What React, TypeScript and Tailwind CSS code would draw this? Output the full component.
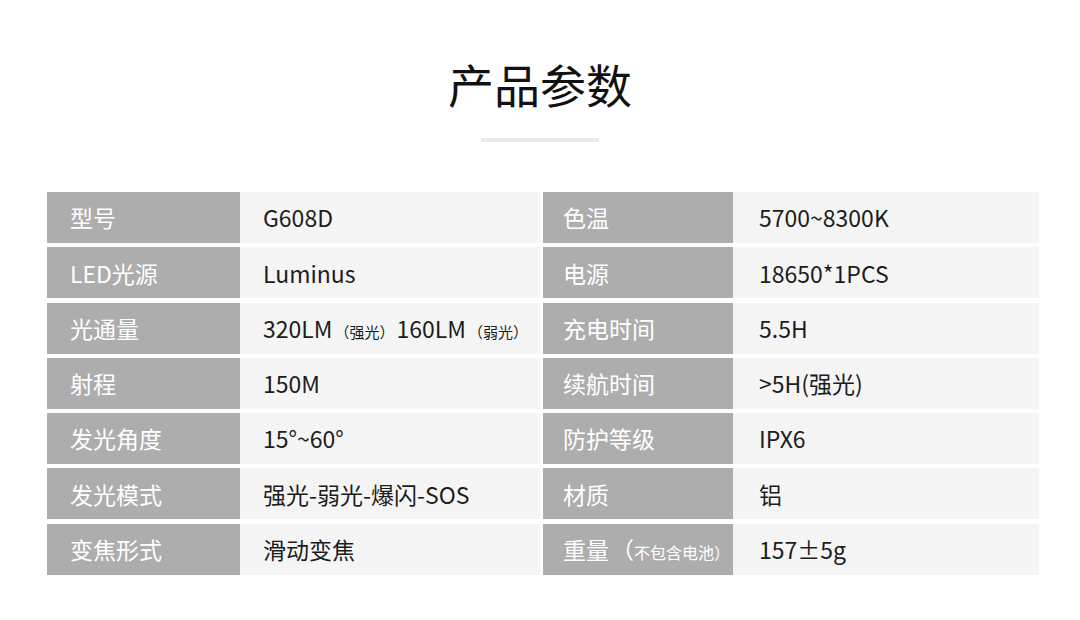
import React from 'react';

type Cell = { label: React.ReactNode; value: React.ReactNode };

const rows: [Cell, Cell][] = [
  [
    { label: '型号', value: 'G608D' },
    { label: '色温', value: '5700~8300K' },
  ],
  [
    { label: 'LED光源', value: 'Luminus' },
    { label: '电源', value: '18650*1PCS' },
  ],
  [
    {
      label: '光通量',
      value: (
        <>
          320LM<span className="text-[15px] mx-[2px]">（强光）</span>160LM
          <span className="text-[15px] ml-[2px]">（弱光）</span>
        </>
      ),
    },
    { label: '充电时间', value: '5.5H' },
  ],
  [
    { label: '射程', value: '150M' },
    { label: '续航时间', value: '>5H(强光)' },
  ],
  [
    { label: '发光角度', value: '15°~60°' },
    { label: '防护等级', value: 'IPX6' },
  ],
  [
    { label: '发光模式', value: '强光-弱光-爆闪-SOS' },
    { label: '材质', value: '铝' },
  ],
  [
    { label: '变焦形式', value: '滑动变焦' },
    {
      label: (
        <>
          重量<span className="ml-[2px]">（</span>
          <span className="text-[16px]">不包含电池）</span>
        </>
      ),
      value: '157±5g',
    },
  ],
];

const App: React.FC = () => {
  return (
    <div
      className="w-[1080px] h-[620px] bg-white overflow-hidden"
      style={{ fontFamily: '"Noto Sans CJK SC", "Noto Sans", sans-serif' }}
    >
      <h1 className="pt-[55px] text-center text-[46px] leading-[56px] font-normal text-[#111]">
        产品参数
      </h1>
      <div className="mx-auto mt-[27px] w-[118px] h-[4px] bg-[#e9e9e9]" />

      <div className="mt-[50px] ml-[47px] w-[992px] flex flex-col gap-[4.3px]">
        {rows.map(([l, r], i) => (
          <div key={i} className="flex h-[51px] text-[23px]">
            <div className="w-[193px] bg-[#adadad] text-white flex items-center pl-[23px]">
              <span>{l.label}</span>
            </div>
            <div className="w-[300px] bg-[#f5f5f5] text-[#1c1c1c] flex items-center pl-[23px]">
              <span>{l.value}</span>
            </div>
            <div className="w-[3px]" />
            <div className="w-[190px] bg-[#adadad] text-white flex items-center pl-[20px] whitespace-nowrap">
              <span>{r.label}</span>
            </div>
            <div className="flex-1 bg-[#f5f5f5] text-[#1c1c1c] flex items-center pl-[26px]">
              <span>{r.value}</span>
            </div>
          </div>
        ))}
      </div>
    </div>
  );
};

export default App;
